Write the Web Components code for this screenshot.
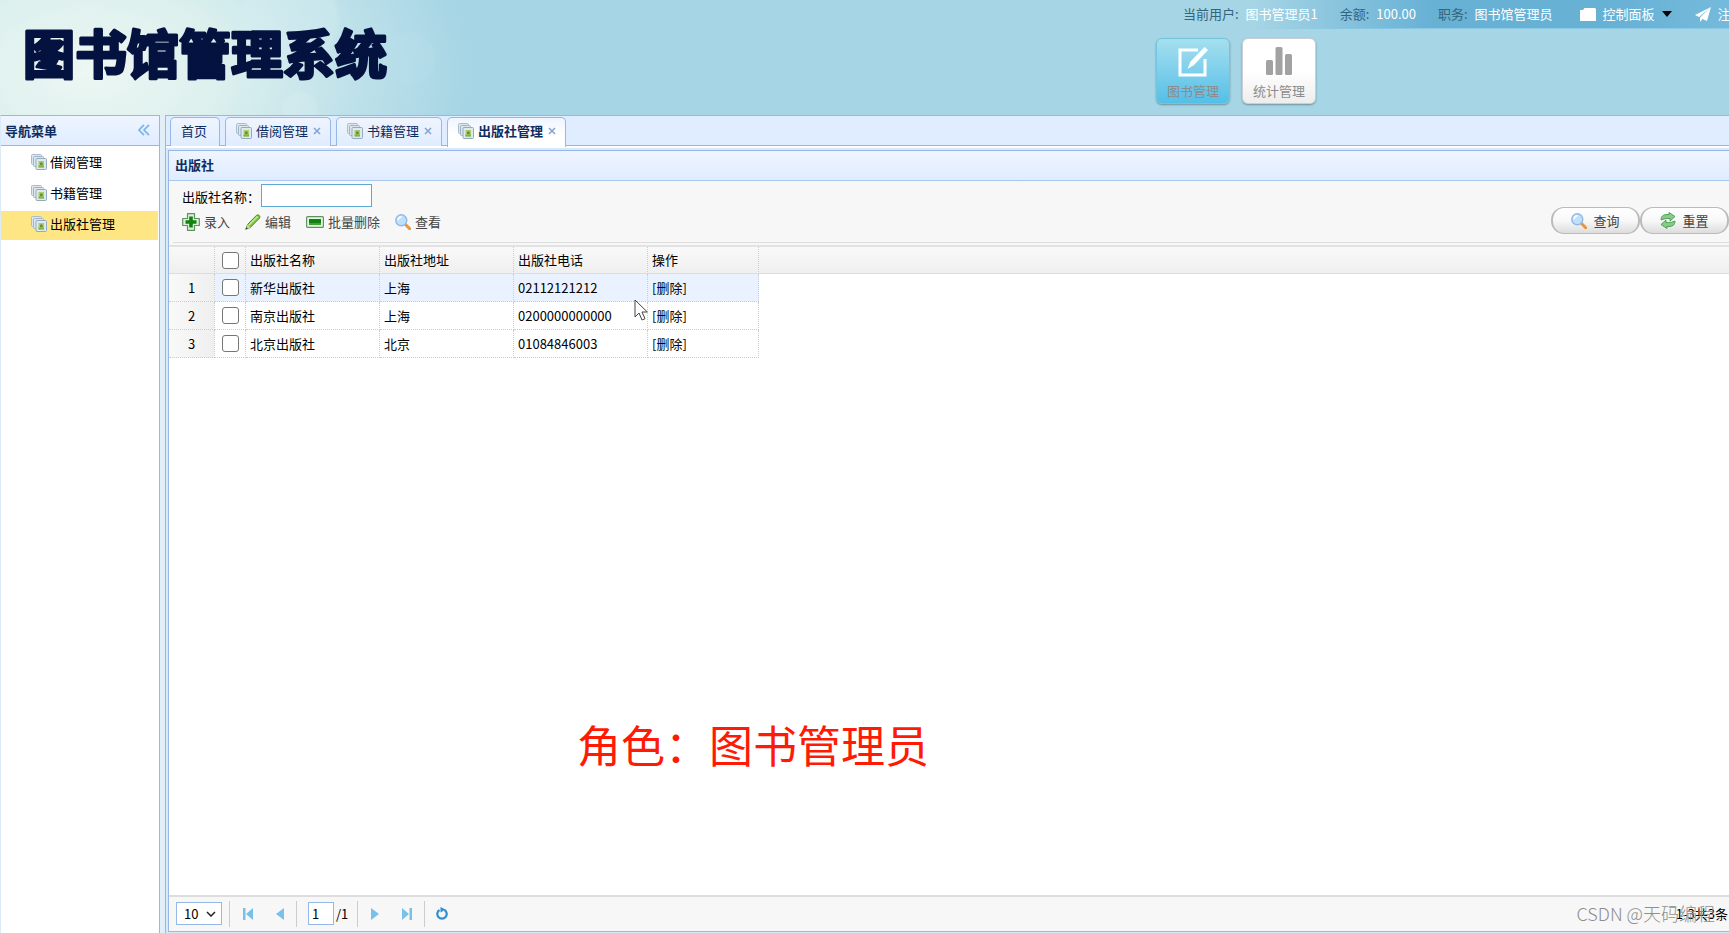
<!DOCTYPE html>
<html lang="zh-CN">
<head>
<meta charset="utf-8">
<title>图书馆管理系统</title>
<style>
html, body { margin: 0; height: 100%; }
body { font: 13px/20px "Noto Sans CJK SC", "Liberation Sans", sans-serif; color: #000; overflow: hidden; }
</style>
</head>
<body>
<lib-app></lib-app>
<script>
function define(name, html, init) {
  const tpl = document.createElement('template');
  tpl.innerHTML = '<style>*{box-sizing:border-box}button,input,select{font:inherit;color:inherit;margin:0}button{border:0;background:none;padding:0;cursor:pointer}a{color:inherit;text-decoration:none}</style>' + html;
  customElements.define(name, class extends HTMLElement {
    constructor() {
      super();
      this.attachShadow({ mode: 'open' }).append(tpl.content.cloneNode(true));
    }
    connectedCallback() { if (init) init(this, this.shadowRoot); }
  });
}

const ICONS = {
  pages: ['0 0 16 16', '<rect x=".5" y=".5" width="10" height="10" rx="1" fill="#dde6ed" stroke="#a9bdcd"/><rect x="2.5" y="2.5" width="10" height="10" rx="1" fill="#dde6ed" stroke="#9fb4c7"/><rect x="5" y="4.5" width="10.500" height="11" rx="1" fill="#dfe8ef" stroke="#93abc0"/><path d="M7.500 7h5.500v6.500H7.500z" fill="#a9cf6c"/><path d="M7.500 11.500H13v2H7.500z" fill="#7fb34a"/><circle cx="10.300" cy="9.800" r="1.500" fill="#6f8a2c"/>'],
  add: ['0 0 18 18', '<path d="M5.500.7h7v4.800h4.800v7h-4.800v4.800h-7v-4.800H.7v-7h4.800z" fill="#dff0da" stroke="#5c9360" stroke-width="1.200" stroke-linejoin="round"/><path d="M7.200 3.500h3.600v3.700h3.700v3.600h-3.700v3.700H7.200v-3.700H3.500V7.200h3.700z" fill="#12820f"/>'],
  edit: ['0 0 16 16', '<path d="M.8 15.200 2.500 10.500 11.500 1.300q1.500-1 2.700.1t.4 2.600L5.300 13.500z" fill="#7fc443" stroke="#4b8f28"/><path d="m3.800 11.300 8.800-8.800" stroke="#c6ec98" stroke-width="1.400"/><path d="m.8 15.200 1.700-4.700 2.800 3z" fill="#e8cf9b"/><path d="m.5 15.500 1-2.500 1.500 1.500z" fill="#444"/>'],
  minus: ['0 0 18 12', '<rect x=".6" y=".6" width="16.800" height="10.800" rx="1" fill="#eaf6e6" stroke="#5c9360" stroke-width="1.200"/><rect x="3" y="3" width="12" height="6" fill="#12820f"/><path d="M3 7h12v2H3z" fill="#3ba62c"/>'],
  search: ['0 0 16 16', '<path d="m10.500 10.500 4.200 4.300" stroke="#e8963c" stroke-width="3" stroke-linecap="round"/><circle cx="6.300" cy="6.300" r="5.500" fill="#bfe0fb" stroke="#91b9e6" stroke-width="1.400"/><path d="M3 6q.5-3 3.500-3.200" fill="none" stroke="#fff" stroke-width="1.600"/>'],
  reset: ['0 0 16 17', '<path d="M1 8Q1 2.500 7 2.500h2V.5l6 4-5 4.500V6.500H7.500Q4 6.500 1 8z" fill="#86cb86" stroke="#459a50" stroke-width=".9"/><path d="M15 9q0 5.500-6 5.500H7v2l-6-4L6 8v2.500h2.500Q12 10.500 15 9z" fill="#86cb86" stroke="#459a50" stroke-width=".9"/>'],
  collapse: ['0 0 12 12', '<path d="M6 .8 1 6l5 5.200M11 .8 6 6l5 5.200" fill="none" stroke="#7cb5ec" stroke-width="1.700"/>'],
  close: ['0 0 8 8', '<path d="m1 1 6 6m0-6L1 7" stroke="#86a4cf" stroke-width="1.600"/>'],
  compose: ['0 0 30 30', '<path d="M20 3H2v25h25V12" fill="none" stroke="#fff" stroke-width="3"/><path d="m26.500 0 3.500 3-14 15-6.500 4 3-7.500z" fill="#fff"/>'],
  bars: ['0 0 26 28', '<rect y="13" width="7" height="15" rx="1.500" fill="#a2a2a2"/><rect x="9.500" width="7" height="28" rx="1.500" fill="#a2a2a2"/><rect x="19" y="7" width="7" height="21" rx="1.500" fill="#a2a2a2"/>'],
  folder: ['0 0 16 13', '<path d="M0 2h3l1.500-2H15l1 1v12H0z" fill="#fff"/>'],
  down: ['0 0 10 6', '<path d="M0 0h10L5 6z" fill="#000"/>'],
  plane: ['0 0 16 15', '<path d="M16 0 0 8l4 2z M16 0 5 10.500V15l2.500-3 4.500 2z" fill="#fff"/>'],
  first: ['0 0 10 12', '<path d="M0 0h2.500v12H0zM10 0v12L3 6z" fill="#79c0ea"/>'],
  prev: ['0 0 8 12', '<path d="M8 0v12L0 6z" fill="#79c0ea"/>'],
  next: ['0 0 8 12', '<path d="M0 0v12l8-6z" fill="#79c0ea"/>'],
  last: ['0 0 10 12', '<path d="M7.500 0H10v12H7.500zM0 0v12l7-6z" fill="#79c0ea"/>'],
  reload: ['0 0 12 13', '<path d="M8.500 3A4.700 4.700 0 1 1 3.500 3" fill="none" stroke="#2f8fd0" stroke-width="2.200"/><path d="M4.500 0v5.500L9.500 2.500z" fill="#2f8fd0"/>'],
  cursor: ['0 0 14 22', '<path d="M1 1v17l4-4 3 7 3-1.300-3-6.700h5.300z" fill="#fff" stroke="#444"/>']
};
customElements.define('lib-icon', class extends HTMLElement {
  connectedCallback() {
    if (this.shadowRoot) return;
    const [box, body] = ICONS[this.getAttribute('name')];
    const [, , w, h] = box.split(' ');
    this.attachShadow({ mode: 'open' }).innerHTML =
      `<style>:host{display:inline-flex;flex:none}svg{display:block}</style><svg width="${w}" height="${h}" viewBox="${box}" aria-hidden="true">${body}</svg>`;
  }
});

define('user-bar', `
<style>
:host { display: flex; align-items: center; height: 29px; width: 593px; padding: 0 0 1px 47px; overflow: hidden; white-space: nowrap; color: #34637c;
  background: linear-gradient(90deg, #8cc9e400 20%, #8cc9e4 50%) 0 100% / 100% 1px no-repeat, linear-gradient(90deg, #67b1d500 20%, #67b1d5 50%, #67b1d5 80%, #75badb); }
span, a { flex: none; margin-right: 22px; }
b { font-weight: 400; color: #fff; margin-left: 4px; }
a { color: #fff; display: flex; align-items: center; gap: 7px; margin-left: 5px; }
a + a { margin-left: 1px; }
</style>
<span>当前用户: <b>图书管理员1</b></span><span>余额: <b>100.00</b></span><span>职务: <b>图书馆管理员</b></span>
<a href="#panel"><lib-icon name="folder"></lib-icon>控制面板<lib-icon name="down"></lib-icon></a>
<a href="#logout"><lib-icon name="plane"></lib-icon>注销</a>`);

define('module-button', `
<style>
:host { display: block; }
button { display: flex; flex-direction: column; align-items: center; justify-content: space-between; width: 74px; height: 66px; padding: 8px 0 2px; border-radius: 6px; color: #8c8c8c;
  background: linear-gradient(#fff, #fff 50%, #ededed); border: 1px solid #c9cfd2; box-shadow: 0 1px 2px #0005; }
:host([active]) button { background: linear-gradient(#a5dfee, #7ecfeb 50%, #54bfe6); border-color: #73c4df; }
</style><button type="button"><slot name="icon"></slot><slot></slot></button>`);

define('app-header', `
<style>
:host { display: flex; justify-content: space-between; height: 115px; overflow: hidden;
  background: radial-gradient(circle at 410px 58px, #b9dfeb55 0 24px, transparent 26px), radial-gradient(circle at 300px 110px, #e5f4f233 0 16px, transparent 20px), radial-gradient(circle at 290px 20px, #d5eef255 0 46px, transparent 52px), radial-gradient(ellipse 380px 240px at 90px 70px, #edf7f3, #dcf0ee 35%, #c0e2ea 68%, #a6d5e500), #a6d5e5; }
h1 { margin: 0; padding: 6px 0 0 20px; }
h1 svg { display: block; }
h1 text { font-size: 52px; font-weight: 700; fill: #03123f; stroke: #03123f; stroke-width: 3px; stroke-linejoin: round; }
nav { display: flex; gap: 12px; padding: 9px 0 0 20px; }
</style>
<h1><svg width="390" height="100"><text x="3" y="68">图书馆管理系统</text></svg></h1>
<div><user-bar></user-bar>
<nav><module-button active><lib-icon slot="icon" name="compose"></lib-icon>图书管理</module-button><module-button><lib-icon slot="icon" name="bars"></lib-icon>统计管理</module-button></nav></div>`);

define('nav-item', `
<style>
:host { display: block; }
a { display: flex; align-items: center; gap: 3px; height: 29px; padding: 0 0 4px 30px; }
:host([active]) a { background: #ffe684; }
</style><a href="#"><lib-icon name="pages"></lib-icon><slot></slot></a>`);

define('side-menu', `
<style>
:host { display: flex; flex-direction: column; width: 160px; flex: none; border: 1px solid #95b8e7; border-left-color: #dcebf7; background: #fff; border-bottom: 0; }
header { display: flex; justify-content: space-between; align-items: center; height: 30px; padding: 0 9px 0 4px; border-bottom: 1px solid #95b8e7; background: linear-gradient(#eff5ff, #e0ecff); }
h2 { margin: 0; font-size: 13px; color: #0e2d5f; }
nav { display: flex; flex-direction: column; gap: 2px; padding: 3px 1px 0 0; }
</style>
<header><h2>导航菜单</h2><button type="button" aria-label="收起"><lib-icon name="collapse"></lib-icon></button></header>
<nav><nav-item>借阅管理</nav-item><nav-item>书籍管理</nav-item><nav-item active>出版社管理</nav-item></nav>`);

define('tab-item', `
<style>
:host { display: flex; align-items: center; gap: 5px; height: 29px; padding: 0 9px 2px 10px; border: 1px solid #95b8e7; border-bottom: 0; border-radius: 5px 5px 0 0; color: #0e2d5f; background: linear-gradient(#eff5ff, #e0ecff); white-space: nowrap; }
:host([active]) { background: linear-gradient(#eff5ff, #fff 60%); font-weight: 700; height: 30px; padding-bottom: 3px; }
:host([home]) { padding-right: 12px; }
button { display: flex; }
button.label { align-items: center; gap: 4px; }
:host([home]) .x, :host([home]) lib-icon { display: none; }
</style>
<button type="button" class="label"><lib-icon name="pages"></lib-icon><slot></slot></button><button type="button" class="x" aria-label="关闭"><lib-icon name="close"></lib-icon></button>`);

define('tab-strip', `
<style>
:host { display: flex; align-items: flex-start; gap: 5px; height: 30px; padding: 1px 0 0 4px; background: #e0ecff; box-shadow: inset 0 -1px #95b8e7; }
</style><slot></slot>`);

define('tool-button', `
<style>
:host { display: block; }
button { display: flex; align-items: center; gap: 4px; color: #444; white-space: nowrap; height: 22px; }
:host([pill]) button { width: 89px; height: 27px; gap: 6px; justify-content: center; border: 1px solid #bbb; border-width: 1px 2px; border-radius: 13px; background: linear-gradient(#fff, #f8f8f8 50%, #ddd); }
</style><button type="button"><slot name="icon"></slot><slot></slot></button>`);

define('search-form', `
<style>
:host { display: flex; align-items: flex-end; justify-content: space-between; height: 61px; background: #f7f7f7; padding: 2px 0 8px 13px; }
.left { display: flex; flex-direction: column; gap: 4px; padding-bottom: 1px; }
.field, .tools { display: flex; align-items: center; }
.field { gap: 1px; }
.tools { gap: 15px; }
label { padding-top: 2px; }
input { width: 111px; height: 23px; border: 1px solid #5fa8d3; background: #fff; padding: 0 4px; outline: 0; }
.right { display: flex; }
</style>
<div class="left"><div class="field"><label for="pub">出版社名称：</label><input id="pub" type="text"></div>
<div class="tools"><tool-button><lib-icon slot="icon" name="add"></lib-icon>录入</tool-button><tool-button><lib-icon slot="icon" name="edit"></lib-icon>编辑</tool-button><tool-button><lib-icon slot="icon" name="minus"></lib-icon>批量删除</tool-button><tool-button><lib-icon slot="icon" name="search"></lib-icon>查看</tool-button></div></div>
<div class="right"><tool-button pill><lib-icon slot="icon" name="search"></lib-icon>查询</tool-button><tool-button pill><lib-icon slot="icon" name="reset"></lib-icon>重置</tool-button></div>`);

define('data-grid', `
<style>
:host { display: block; flex: 1; border-top: 2px solid #e2e2e2; background: linear-gradient(#f9f9f9, #efefef) 0 0 / 100% 26px no-repeat, linear-gradient(#ddd, #ddd) 0 26px / 100% 1px no-repeat, #fff; }
table { border-collapse: separate; border-spacing: 0; table-layout: fixed; width: 590px; }
th, td { height: 28px; padding: 0 4px; text-align: left; font-weight: 400; border-right: 1px dotted #ccc; border-bottom: 1px dotted #ccc; line-height: 20px; white-space: nowrap; }
thead th { height: 27px; border-bottom: 1px solid #ddd; }
th.n { text-align: center; background: linear-gradient(90deg, #f9f9f9, #efefef); }
thead th.n { background: none; }
th.c, td.c { padding: 0; text-align: center; }
.hover td { background: #eaf2ff; }
input { appearance: none; display: block; width: 17px; height: 17px; margin: 0 auto; border: 1px solid #767676; border-radius: 3px; background: #fff; }
</style>
<table><colgroup><col style="width:46px"><col style="width:31px"><col style="width:134px"><col style="width:134px"><col style="width:134px"><col style="width:111px"></colgroup>
<thead><tr><th class="n"></th><th class="c"><input type="checkbox" aria-label="全选"></th><th>出版社名称</th><th>出版社地址</th><th>出版社电话</th><th>操作</th></tr></thead><tbody></tbody></table>`,
(host, root) => {
  const rows = [['新华出版社', '上海', '02112121212'], ['南京出版社', '上海', '0200000000000'], ['北京出版社', '北京', '01084846003']];
  root.querySelector('tbody').innerHTML = rows.map((r, i) =>
    `<tr${i ? '' : ' class="hover"'}><th class="n" scope="row">${i + 1}</th><td class="c"><input type="checkbox" aria-label="${r[0]}"></td>${r.map(c => `<td>${c}</td>`).join('')}<td><a href="#">[删除]</a></td></tr>`).join('');
});

define('grid-pager', `
<style>
:host { display: flex; align-items: center; height: 36px; padding: 0 0 1px 7px; background: #f7f7f7; border-top: 2px solid #ddd; }
select, input { height: 23px; border: 1px solid #95b8e7; background: #fff; }
.size { display: grid; align-items: center; width: 46px; }
.size > * { grid-area: 1 / 1; }
select { width: 46px; padding: 0 0 0 7px; appearance: none; }
.size svg { justify-self: end; margin-right: 6px; pointer-events: none; }
i { width: 1px; height: 26px; background: #ccc; }
.size + i { margin-left: 7px; }
.pair { display: flex; justify-content: space-between; width: 66px; padding: 0 12px 0 13px; }
.page { display: flex; align-items: center; gap: 2px; padding: 0 9px 0 11px; }
input { width: 26px; padding: 0 3px; }
button { display: flex; }
.reload { margin-left: 11px; }
output { margin-left: auto; padding-right: 1px; }
</style>
<div class="size"><select aria-label="每页条数"><option>10</option></select><svg width="10" height="6" viewBox="0 0 10 6"><path d="m1 1 4 4 4-4" fill="none" stroke="#222" stroke-width="1.500"/></svg></div>
<i></i>
<div class="pair"><button type="button" aria-label="首页"><lib-icon name="first"></lib-icon></button><button type="button" aria-label="上一页"><lib-icon name="prev"></lib-icon></button></div>
<i></i><label class="page"><input type="text" value="1" aria-label="页码">/1</label><i></i>
<div class="pair"><button type="button" aria-label="下一页"><lib-icon name="next"></lib-icon></button><button type="button" aria-label="末页"><lib-icon name="last"></lib-icon></button></div>
<i></i><button type="button" class="reload" aria-label="刷新"><lib-icon name="reload"></lib-icon></button>
<output>1-3共3条</output>`);

define('data-panel', `
<style>
:host { display: flex; flex-direction: column; flex: 1; margin: 4px 0 1px 2px; border: 1px solid #95b8e7; border-right: 0; min-height: 0; }
h2 { margin: 0; height: 30px; padding: 0 6px; font-size: 13px; line-height: 28px; color: #0e2d5f; background: linear-gradient(#eff5ff, #e0ecff); border-bottom: 1px solid #a9c6ec; }
.rule { background: #f7f7f7; height: 3px; padding-left: 4px; }
.rule::before { content: ""; display: block; height: 1px; background: #ddd; }
</style>
<h2>出版社</h2><search-form></search-form><div class="rule"></div><data-grid></data-grid><grid-pager></grid-pager>`);

define('lib-app', `
<style>
:host { display: flex; flex-direction: column; height: 100vh; position: relative; background: #e2eff8; overflow: hidden; }
.body { display: flex; flex: 1; gap: 5px; min-height: 0; }
main { flex: 1; display: flex; flex-direction: column; min-width: 0; border: 1px solid #95b8e7; border-right: 0; border-bottom: 0; background: linear-gradient(#fff, #fff) 0 30px / 100% 2px no-repeat, #d9e8f8; }
.caption, .mark, .cursor { position: absolute; pointer-events: none; white-space: nowrap; margin: 0; }
.caption { left: 577px; top: 712px; font-size: 44px; line-height: 64px; color: #ff1a05; }
.mark { right: 14px; bottom: 8px; font-size: 18px; line-height: 24px; color: #8e8e8e; font-weight: 300; }
.cursor { left: 634px; top: 299px; }
</style>
<app-header></app-header>
<div class="body"><side-menu></side-menu>
<main><tab-strip><tab-item home>首页</tab-item><tab-item>借阅管理</tab-item><tab-item>书籍管理</tab-item><tab-item active>出版社管理</tab-item></tab-strip>
<data-panel></data-panel></main></div>
<p class="caption">角色：图书管理员</p><p class="mark">CSDN @天码编程</p><lib-icon class="cursor" name="cursor"></lib-icon>`);
</script>
</body>
</html>
